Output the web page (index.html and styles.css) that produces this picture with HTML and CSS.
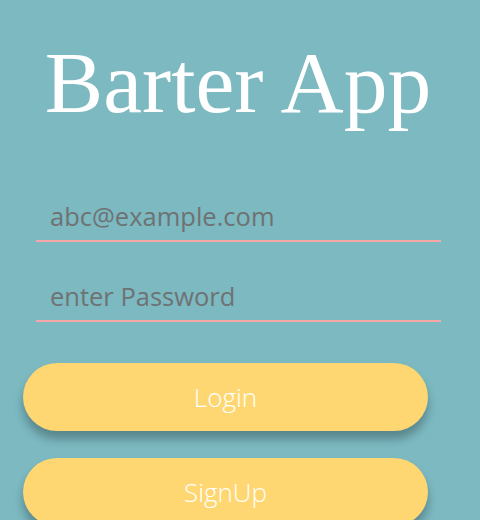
FILE: index.html
```html
<!DOCTYPE html>
<html>
<head>
<meta charset="utf-8">
<link rel="stylesheet" href="styles.css">
</head>
<body>
<div class="screen">
  <h1 class="title">Barter App</h1>
  <div class="form">
    <div class="field"><span class="placeholder">abc@example.com</span></div>
    <div class="field field-second"><span class="placeholder">enter Password</span></div>
  </div>
  <div class="actions">
    <button class="btn">Login</button>
    <button class="btn">SignUp</button>
  </div>
</div>
</body>
</html>
```
FILE: styles.css
```css
html, body {
  margin: 0;
  padding: 0;
  height: 100%;
  background: #7cb9c1;
  overflow: hidden;
}
.screen {
  padding-top: 33px;
  display: flex;
  flex-direction: column;
}
.title {
  margin: 0;
  font-family: "Liberation Serif", "Times New Roman", serif;
  font-weight: 400;
  font-size: 87.5px;
  line-height: 100px;
  color: #ffffff;
  text-align: center;
  padding-right: 4px;
}
.form {
  margin-top: 59px;
  display: flex;
  flex-direction: column;
  gap: 30px;
}
.field {
  box-sizing: border-box;
  margin-left: 36px;
  width: 405px;
  height: 50px;
  padding: 8px 0 8px 14px;
  border-bottom: 2px solid #f4a8a8;
}
.placeholder {
  display: block;
  font-family: "Open Sans", sans-serif;
  font-size: 25.5px;
  line-height: 32px;
  color: #6f7273;
}
.actions {
  margin-top: 41px;
  display: flex;
  flex-direction: column;
  gap: 27px;
}
.btn {
  margin-left: 23px;
  width: 405px;
  height: 68px;
  border: none;
  border-radius: 34px;
  background: #fed772;
  color: #ffffff;
  font-family: "Open Sans", sans-serif;
  font-weight: 300;
  font-size: 26px;
  box-shadow: 0 8px 10px rgba(0, 0, 0, 0.28);
  padding: 0;
}
```
